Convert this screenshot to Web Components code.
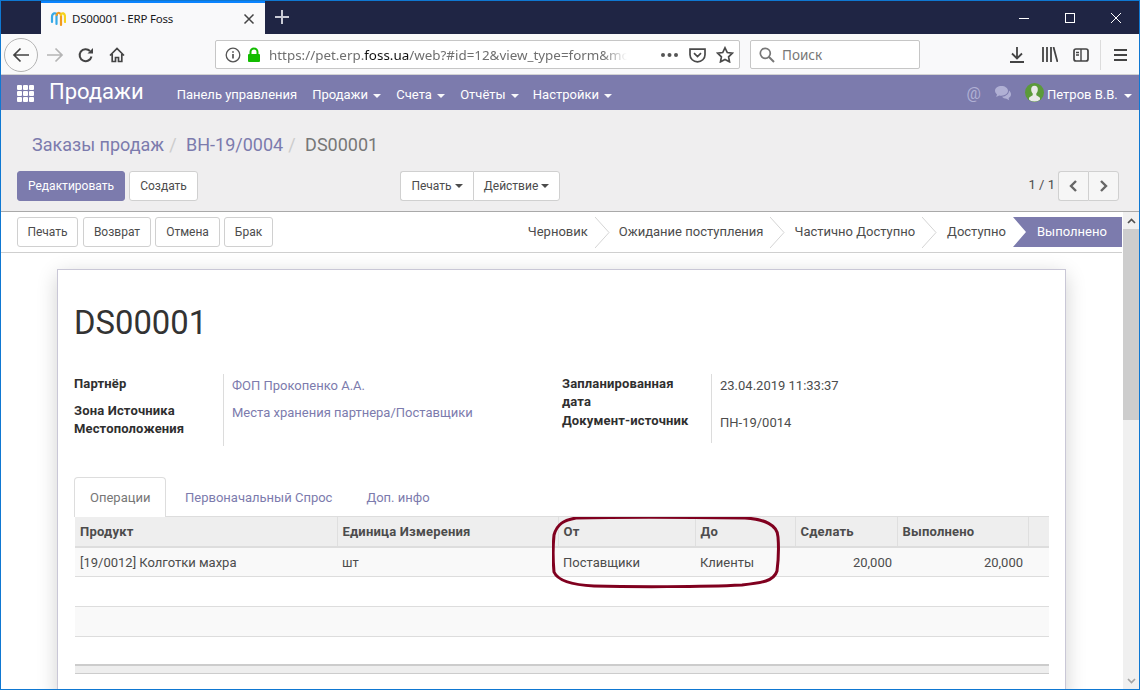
<!DOCTYPE html>
<html lang="ru">
<head>
<meta charset="utf-8">
<title>DS00001 - ERP Foss</title>
<style>
html, body { margin: 0; padding: 0; background: #fff; }
body { font: 13px Roboto, sans-serif; color: #4c4c4c; overflow: hidden; }
#page {
  box-sizing: border-box; width: 1140px; height: 690px; overflow: hidden;
  border: 1px solid #0f78d2; display: flex; flex-direction: column; position: relative;
}
#below { flex: 1; min-height: 0; display: flex; }
#main { flex: 1; min-width: 0; display: flex; flex-direction: column; }
</style>
</head>
<body>
<div id="page">
  <browser-tabs></browser-tabs>
  <browser-toolbar></browser-toolbar>
  <erp-navbar></erp-navbar>
  <erp-control-panel></erp-control-panel>
  <div id="below">
    <div id="main">
      <erp-statusbar></erp-statusbar>
      <erp-form>
        <erp-sheet>
          <erp-fields slot="left">
            <erp-field label="Партнёр" link style="height:28px;--top:1px">ФОП Прокопенко А.А.</erp-field>
            <erp-field label="Зона Источника Местоположения" link style="height:44px;--top:0px">Места хранения партнера/Поставщики</erp-field>
          </erp-fields>
          <erp-fields slot="right">
            <erp-field label="Запланированная дата" style="height:38px;--top:1px">23.04.2019 11:33:37</erp-field>
            <erp-field label="Документ-источник" style="height:31px;--top:0px">ПН-19/0014</erp-field>
          </erp-fields>
          <erp-tabs slot="tabs"></erp-tabs>
          <erp-lines slot="lines"></erp-lines>
        </erp-sheet>
      </erp-form>
    </div>
    <erp-scrollbar></erp-scrollbar>
  </div>
</div>

<script>
// every element just gets its html set in the shadow root
function shadow (el, html) {
  el.attachShadow({ mode: 'open' }).innerHTML = html
}

const CARET = `<i style="display:inline-block;width:0;height:0;border:4px solid transparent;border-top-color:currentColor;border-bottom:0;vertical-align:middle"></i>`

class BrowserTabs extends HTMLElement {
  connectedCallback () {
    shadow(this, `<style>
:host { display: flex; height: 33px; background: #1f2544; flex: none; }
.tab {
  margin-left: 40px; width: 224px; box-sizing: border-box; background: #f9f9fa; border-top: 2px solid #0a84ff;
  display: flex; align-items: center; padding-left: 9px; color: #18181a;
  font: 11.5px "Noto Sans", sans-serif;
}
.tab svg.fav { margin-right: 6px; }
.tab span { flex: 1; letter-spacing: -.2px; }
.tab .x { margin-right: 10px; }
.plus { margin: 8px 0 0 10px; }
.win { margin-left: auto; display: flex; }
.win div { width: 46px; height: 33px; display: flex; align-items: center; justify-content: center; }
</style>
<div class="tab">
  <svg class="fav" width="16" height="16" viewBox="0 0 16 16" fill="none" stroke-width="2.2" stroke-linecap="round">
    <path d="M2 11V6C2 2 6 1 7 4" stroke="#37a9e6"/><path d="M6.500 5V13" stroke="#37a9e6"/>
    <path d="M6.500 4C7.500 1 10 1 11 4V14" stroke="#f19a1e"/>
    <path d="M11 4C12 1 15 2 15 6V11" stroke="#f6d21c"/>
  </svg>
  <span>DS00001 - ERP Foss</span>
  <svg class="x" width="12" height="12" viewBox="0 0 12 12" stroke="#444" stroke-width="1.5"><path d="M1.5 1.5l9 9M10.5 1.5l-9 9"/></svg>
</div>
<svg class="plus" width="14" height="16" viewBox="0 0 14 16" stroke="#c9cbd6" stroke-width="2"><path d="M7 1v14M0 8h14"/></svg>
<div class="win">
  <div><svg width="12" height="12" stroke="#fff"><path d="M1 6.5h10"/></svg></div>
  <div><svg width="12" height="12" stroke="#fff" fill="none"><rect x="1.5" y="1.5" width="9" height="9"/></svg></div>
  <div><svg width="12" height="12" stroke="#fff"><path d="M1 1l10 10M11 1L1 11"/></svg></div>
</div>`)
  }
}

class BrowserToolbar extends HTMLElement {
  connectedCallback () {
    shadow(this, `<style>
:host { display: flex; align-items: center; height: 41px; box-sizing: border-box; padding-top: 1px; background: #f9f9fa; border-bottom: 1px solid #d2d2d2; flex: none; font: 13.5px "Noto Sans", sans-serif; }
.back { width: 34px; height: 34px; margin-left: 3px; border: 1px solid #b4b4b4; border-radius: 50%; box-sizing: border-box; background: #fbfbfb; display: flex; align-items: center; justify-content: center; }
.ic { display: flex; flex: none; }
.url { width: 525px; height: 29px; box-sizing: border-box; background: #fff; border: 1px solid #c6c6c6; border-radius: 2px; display: flex; align-items: center; color: #6f6f6f; flex: none; }
.url .txt { margin-left: 8px; width: 358px; white-space: nowrap; -webkit-mask-image: linear-gradient(90deg,#000 93%,transparent); mask-image: linear-gradient(90deg,#000 93%,transparent); font-size: 13.4px; }
.url b { font-weight: 400; color: #111; }
.search { margin-left: 10px; width: 170px; height: 29px; box-sizing: border-box; background: #fff; border: 1px solid #c6c6c6; border-radius: 2px; display: flex; align-items: center; color: #777; flex: none; padding-left: 8px; gap: 7px; }
.sep { width: 1px; height: 30px; background: #dcdcdc; margin-left: 11px; margin-right: 13px; }
</style>
<div class="back"><svg width="18" height="16" viewBox="0 0 18 16" fill="none" stroke="#444" stroke-width="1.7"><path d="M17 8H2M8.5 1.5L2 8l6.5 6.5"/></svg></div>
<svg class="ic" style="margin-left:8px" width="18" height="16" viewBox="0 0 18 16" fill="none" stroke="#b5b5b5" stroke-width="1.7"><path d="M1 8h15M9.5 1.5L16 8l-6.5 6.5"/></svg>
<svg class="ic" style="margin-left:14px" width="16" height="16" viewBox="0 0 16 16" fill="none" stroke="#444" stroke-width="2"><path d="M13.5 9.500A6 6 0 1 1 12 4"/><path d="M15 1v5.500H9.500" fill="#444" stroke="none"/></svg>
<svg class="ic" style="margin-left:15px" width="16" height="16" viewBox="0 0 16 16" fill="none" stroke="#444" stroke-width="1.7"><path d="M1 8.500L8 1.500l7 7M3.200 7v7.500h3.300v-4h3v4h3.300V7"/></svg>
<div class="url" style="margin-left:90px">
  <svg style="margin-left:9px" width="16" height="16" viewBox="0 0 16 16" fill="none" stroke="#555" stroke-width="1.3"><circle cx="8" cy="8" r="6.800"/><path d="M8 7v4.500M8 4.200v1.500" stroke-width="1.7"/></svg>
  <svg style="margin-left:6px" width="14" height="16" viewBox="0 0 14 16"><path d="M3.500 7V5a3.500 3.500 0 0 1 7 0v2" fill="none" stroke="#12bc00" stroke-width="2"/><rect x="1" y="7" width="12" height="8" rx="1" fill="#12bc00"/></svg>
  <span class="txt">https://pet.erp.<b>foss.ua</b>/web?#id=12&amp;view_type=form&amp;mo</span>
  <svg style="margin-left:34px" width="17" height="4" fill="#555"><circle cx="2" cy="2" r="2"/><circle cx="8.500" cy="2" r="2"/><circle cx="15" cy="2" r="2"/></svg>
  <svg style="margin-left:11px" width="17" height="16" viewBox="0 0 17 16" fill="none" stroke="#4a4a4a" stroke-width="1.7"><path d="M1 2.200h15v5.600a7.500 7 0 0 1-15 0zM5 6.200l3.500 3.300L12 6.200"/></svg>
  <svg style="margin-left:10px" width="18" height="17" viewBox="0 0 18 17" fill="none" stroke="#4a4a4a" stroke-width="1.7"><path d="M9 1.800l2.300 4.700 5 .7-3.700 3.600.9 5L9 13.400 4.500 15.800l.9-5L1.700 7.200l5-.7z"/></svg>
</div>
<div class="search">
  <svg width="16" height="16" viewBox="0 0 16 16" fill="none" stroke="#777" stroke-width="1.7"><circle cx="6.300" cy="6.300" r="5"/><path d="M10 10l5 5" stroke-width="2"/></svg>
  <span>Поиск</span>
</div>
<svg class="ic" style="margin-left:90px" width="14" height="16" viewBox="0 0 14 16" fill="none" stroke="#444" stroke-width="1.8"><path d="M7 0v11M2 6.500L7 11.500l5-5M0 15h14"/></svg>
<svg class="ic" style="margin-left:18px" width="16" height="15" viewBox="0 0 16 15" fill="none" stroke="#444" stroke-width="1.8"><path d="M1 0v15M5 0v15M9 0v15M11.500 0L15.500 15"/></svg>
<svg class="ic" style="margin-left:15px" width="16" height="14" viewBox="0 0 16 14" fill="none" stroke="#444" stroke-width="1.7"><rect x="1" y="1" width="14" height="12" rx="2"/><path d="M8 1v12M3 4.500h3M3 7h3" stroke-width="1.4"/></svg>
<div class="sep"></div>
<svg class="ic" width="13" height="12" stroke="#444" stroke-width="2"><path d="M0 1h13M0 6h13M0 11h13"/></svg>`)
  }
}

class ErpNavbar extends HTMLElement {
  connectedCallback () {
    const menu = (t, ml) => `<span class="m" style="margin-left:${ml}px">${t} ${CARET}</span>`
    shadow(this, `<style>
:host { display: flex; align-items: center; height: 35px; box-sizing: border-box; padding-top: 4px; background: #7c7bad; color: #fff; flex: none; font: 13px Roboto, sans-serif; }
.apps { margin: 0 0 2px 16px; display: grid; grid-template-columns: repeat(3,5px); gap: 1px; }
.apps i { width: 5px; height: 5px; background: #fff; border-radius: 1px; }
.brand { font-size: 22px; margin: 0 0 6px 15px; }
.right { margin-left: auto; display: flex; align-items: center; }
.m i { opacity: .95; margin-left: 2px; }
.user i { margin-left: 3px; }
</style>
<div class="apps"><i></i><i></i><i></i><i></i><i></i><i></i><i></i><i></i><i></i></div>
<span class="brand">Продажи</span>
<span style="margin-left:33px">Панель управления</span>
${menu('Продажи', 15)}${menu('Счета', 15)}${menu('Отчёты', 15)}${menu('Настройки', 14)}
<div class="right">
  <span style="font-size:16px;color:#b0b0d4;margin-bottom:2px">@</span>
  <svg style="margin:0 0 2px 14px" width="18" height="15" viewBox="0 0 18 15" fill="#b0b0d4"><path d="M6.500 0C3 0 0 2 0 4.800c0 1.500.8 2.700 2 3.600L1.200 11l3-1.600c.7.2 1.500.3 2.300.3 3.600 0 6.500-2.200 6.500-4.900S10 0 6.500 0z"/><path d="M14 4.500c.1 3.500-3.200 6-7 6.200 1 1.300 2.700 2 4.500 2l2.700 1.500-.6-2.300c1.500-.8 2.400-2 2.400-3.500 0-1.700-.8-3-2-3.900z"/></svg>
  <svg style="margin:0 0 4px 12px" width="19" height="19" viewBox="0 0 19 19"><circle cx="9.500" cy="9.500" r="9.500" fill="#5b9a3a"/><path d="M9.500 2.800c-2.500 0-3.500 2-3.300 4.200.1 1.400.7 2.700 1.500 3.500v1.700c-1 .9-3 1.300-3.700 2.700v1.600c1 1.200 3 2 5.500 2s4.500-.8 5.500-2v-1.600c-.7-1.400-2.700-1.800-3.700-2.700v-1.700c.8-.8 1.400-2.100 1.500-3.500.2-2.200-.8-4.200-3.300-4.200z" fill="#e9e9e9"/></svg>
  <span class="user" style="margin-left:3px">Петров В.В. ${CARET}</span>
  <span style="width:7px"></span>
</div>`)
  }
}

class ErpButton extends HTMLElement {
  connectedCallback () {
    shadow(this, `<style>
:host { display: inline-flex; align-items: center; justify-content: center; height: 30px; box-sizing: border-box; padding: 0 5px; background: #fff; color: #4c4c4c; border: 1px solid #d0d0d0; border-radius: 3px; font: 12px Roboto, sans-serif; white-space: nowrap; flex: none; }
:host([primary]) { background: #7c7bad; border-color: #7c7bad; color: #fff; }
</style><slot></slot>`)
  }
}

class ErpControlPanel extends HTMLElement {
  connectedCallback () {
    shadow(this, `<style>
:host { display: block; height: 102px; box-sizing: border-box; background: #efeeef; border-bottom: 1px solid #a9a9a9; flex: none; padding-left: 16px; }
.crumbs { padding: 24px 0 0 15px; height: 37px; line-height: 22px; font-size: 18px; color: #777; white-space: nowrap; }
.crumbs a { color: #7c7bad; }
.crumbs s { text-decoration: none; color: #ccc; padding: 0 5px; }
.row { display: flex; align-items: center; }
.group { display: flex; margin-left: 202px; }
.group erp-button:first-child { border-radius: 3px 0 0 3px; border-right: 0; }
.group erp-button:last-child { border-radius: 0 3px 3px 0; }
.pager { margin-left: auto; margin-right: 20px; display: flex; align-items: center; }
.pager span { margin: 0 3px 4px 0; }
.pager div { width: 30px; height: 30px; box-sizing: border-box; border: 1px solid #d0d0d0; background: #f6f6f6; display: flex; align-items: center; justify-content: center; }
.pager div:first-of-type { border-radius: 3px 0 0 3px; border-right: 0; width: 30px; }
.pager div:last-of-type { border-radius: 0 3px 3px 0; width: 31px; }
</style>
<div class="crumbs"><a>Заказы продаж</a><s>/</s> <a>ВН-19/0004</a><s>/</s> DS00001</div>
<div class="row">
  <erp-button primary style="width:108px">Редактировать</erp-button>
  <erp-button style="margin-left:4px;width:69px">Создать</erp-button>
  <div class="group">
    <erp-button style="width:73px">Печать&nbsp;${CARET}</erp-button>
    <erp-button style="width:87px">Действие&nbsp;${CARET}</erp-button>
  </div>
  <div class="pager">
    <span>1 / 1</span>
    <div><svg width="9" height="12" viewBox="0 0 9 12" fill="none" stroke="#666" stroke-width="2.4"><path d="M7 1L2 6l5 5"/></svg></div>
    <div><svg width="9" height="12" viewBox="0 0 9 12" fill="none" stroke="#666" stroke-width="2.4"><path d="M2 1l5 5-5 5"/></svg></div>
  </div>
</div>`)
  }
}

class ErpStatusbar extends HTMLElement {
  connectedCallback () {
    const arrow = `<svg width="15" height="31" viewBox="0 0 15 31" fill="none" stroke="#d4d4d4"><path d="M0 0l14 15.500L0 31"/></svg>`
    shadow(this, `<style>
:host { display: flex; align-items: center; height: 41px; box-sizing: border-box; border-bottom: 1px solid #cfcfcf; padding-left: 16px; background: #fff; flex: none; }
.st { margin-left: auto; display: flex; align-items: center; }
.st span { padding-bottom: 2px; }
.st svg { flex: none; }
.done { width: 109px; height: 30px; box-sizing: border-box; background: #7c7bad; color: #fff; display: flex; align-items: center; padding: 0 0 2px 24px; clip-path: polygon(0 0,100% 0,100% 100%,0 100%,13px 50%); }
</style>
<erp-button style="width:61px">Печать</erp-button>
<erp-button style="width:68px;margin-left:5px">Возврат</erp-button>
<erp-button style="width:65px;margin-left:4px">Отмена</erp-button>
<erp-button style="width:49px;margin-left:4px">Брак</erp-button>
<div class="st">
  <span>Черновик</span><i style="width:7px"></i>${arrow}<i style="width:9px"></i>
  <span>Ожидание поступления</span><i style="width:7px"></i>${arrow}<i style="width:9px"></i>
  <span>Частично Доступно</span><i style="width:7px"></i>${arrow}<i style="width:10px"></i>
  <span>Доступно</span><i style="width:7px"></i>
  <div class="done">Выполнено</div>
</div>`)
  }
}

class ErpForm extends HTMLElement {
  connectedCallback () {
    shadow(this, `<style>
:host { display: block; flex: 1; min-height: 0; overflow: hidden; padding: 16px 0 0 56px; background: #fff; }
</style><slot></slot>`)
  }
}

class ErpSheet extends HTMLElement {
  connectedCallback () {
    shadow(this, `<style>
:host { display: block; box-sizing: border-box; width: 1009px; height: 430px; background: #fff; border: 1px solid #c9c7d6; box-shadow: 0 5px 20px -1px rgba(0,0,0,.2); padding: 33px 16px 0; }
h1 { margin: 0; font: 400 32.8px/40px Roboto, sans-serif; color: #333; }
.groups { display: flex; margin-top: 31px; height: 72px; }
.groups > div:first-child { width: 488px; }
.tabs { margin-top: 31px; }
.lines { margin-left: 1px; }
</style>
<h1>DS00001</h1>
<div class="groups"><div><slot name="left"></slot></div><div><slot name="right"></slot></div></div>
<div class="tabs"><slot name="tabs"></slot></div>
<div class="lines"><slot name="lines"></slot></div>`)
  }
}

class ErpFields extends HTMLElement {
  connectedCallback () {
    shadow(this, `<style>:host { display: block; }</style><slot></slot>`)
  }
}

class ErpField extends HTMLElement {
  connectedCallback () {
    const cls = this.hasAttribute('link') ? 'link' : ''
    shadow(this, `<style>
:host { display: flex; box-sizing: border-box; line-height: 18px; }
.l { width: 149px; box-sizing: border-box; flex: none; font-weight: 700; color: #2f2f2f; padding-top: var(--top); padding-right: 20px; letter-spacing: .15px; }
.v { flex: 1; border-left: 1px solid #dcdcdc; padding: calc(var(--top) + 2px) 0 0 8px; color: #4c4c4c; white-space: nowrap; }
.link { color: #7c7bad; }
</style>
<div class="l">${this.getAttribute('label')}</div>
<div class="v ${cls}"><slot></slot></div>`)
  }
}

class ErpTabs extends HTMLElement {
  connectedCallback () {
    shadow(this, `<style>
:host { display: flex; height: 40px; box-sizing: border-box; border-bottom: 1px solid #ddd; }
span { padding: 0 15px; margin-right: 4px; height: 39px; line-height: 42px; color: #7c7bad; white-space: nowrap; }
.on { color: #777; background: #fff; border: 1px solid #ddd; border-bottom: 0; border-radius: 4px 4px 0 0; height: 40px; box-sizing: border-box; width: 92px; line-height: 40px; margin-bottom: -1px; }
</style>
<span class="on">Операции</span><span>Первоначальный Спрос</span><span>Доп. инфо</span>`)
  }
}

class ErpLines extends HTMLElement {
  connectedCallback () {
    const cols = [262, 221, 137, 100, 102, 131, 21]
    shadow(this, `<style>
:host { display: block; width: 974px; position: relative; }
table { border-collapse: collapse; table-layout: fixed; width: 974px; font-size: 13px; }
th { background: #eee; height: 30px; box-sizing: border-box; padding: 0 5px; text-align: left; font-weight: 700; color: #4c4c4c; border-left: 1px solid #dfdfdf; border-bottom: 2px solid #ddd; letter-spacing: .2px; }
th:first-child, td:first-child { border-left: 0; }
td { padding: 2px 5px 0; height: 29px; box-sizing: border-box; border-bottom: 1px solid #ddd; white-space: nowrap; }
tr.odd td { background: #f9f9f9; }
tr.blank td { height: 30px; }
tr.last td { height: 29px; border-bottom: 0; }
.r { text-align: right; }
tfoot td { height: 8px; padding: 0; background: #eee; border-top: 2px solid #ccc; border-bottom: 1px solid #ccc; }
svg { position: absolute; left: 477px; top: 0; pointer-events: none; }
</style>
<table>
<colgroup>${cols.map(w => `<col style="width:${w}px">`).join('')}</colgroup>
<thead><tr><th>Продукт</th><th>Единица Измерения</th><th>От</th><th>До</th><th>Сделать</th><th>Выполнено</th><th></th></tr></thead>
<tbody>
<tr class="odd"><td>[19/0012] Колготки махра</td><td>шт</td><td>Поставщики</td><td>Клиенты</td><td class="r">20,000</td><td class="r">20,000</td><td></td></tr>
<tr class="blank"><td colspan="7"></td></tr>
<tr class="odd blank"><td colspan="7"></td></tr>
<tr class="last"><td colspan="7"></td></tr>
</tbody>
<tfoot><tr><td colspan="7"></td></tr></tfoot>
</table>
<svg width="232" height="74" viewBox="0 0 232 74" fill="none" stroke="#80001f" stroke-width="3">
<path d="M24 1C60 0 130 0 193 1C212 2 226 8 226 20C227 32 226 46 225 54C222 64 210 66 190 68C150 70 80 70 42 69C20 68 6 64 2 55C1 44 1 28 2 18C5 7 12 3 24 1Z"/>
</svg>`)
  }
}

class ErpScrollbar extends HTMLElement {
  connectedCallback () {
    shadow(this, `<style>
:host { display: flex; flex-direction: column; width: 16px; margin-left: 1px; background: #f0f0f0; flex: none; }
.a { height: 17px; display: flex; align-items: center; justify-content: center; flex: none; }
.t { height: 191px; background: #cdcdcd; flex: none; }
.s { flex: 1; }
</style>
<div class="a"><svg width="9" height="6" fill="none" stroke="#505050" stroke-width="1.7"><path d="M1 5l3.500-3.500L8 5"/></svg></div>
<div class="t"></div><div class="s"></div>
<div class="a"><svg width="9" height="6" fill="none" stroke="#a3a3a3" stroke-width="1.7"><path d="M1 1l3.500 3.500L8 1"/></svg></div>`)
  }
}

customElements.define('browser-tabs', BrowserTabs)
customElements.define('browser-toolbar', BrowserToolbar)
customElements.define('erp-navbar', ErpNavbar)
customElements.define('erp-button', ErpButton)
customElements.define('erp-control-panel', ErpControlPanel)
customElements.define('erp-statusbar', ErpStatusbar)
customElements.define('erp-form', ErpForm)
customElements.define('erp-sheet', ErpSheet)
customElements.define('erp-fields', ErpFields)
customElements.define('erp-field', ErpField)
customElements.define('erp-tabs', ErpTabs)
customElements.define('erp-lines', ErpLines)
customElements.define('erp-scrollbar', ErpScrollbar)
</script>
</body>
</html>
